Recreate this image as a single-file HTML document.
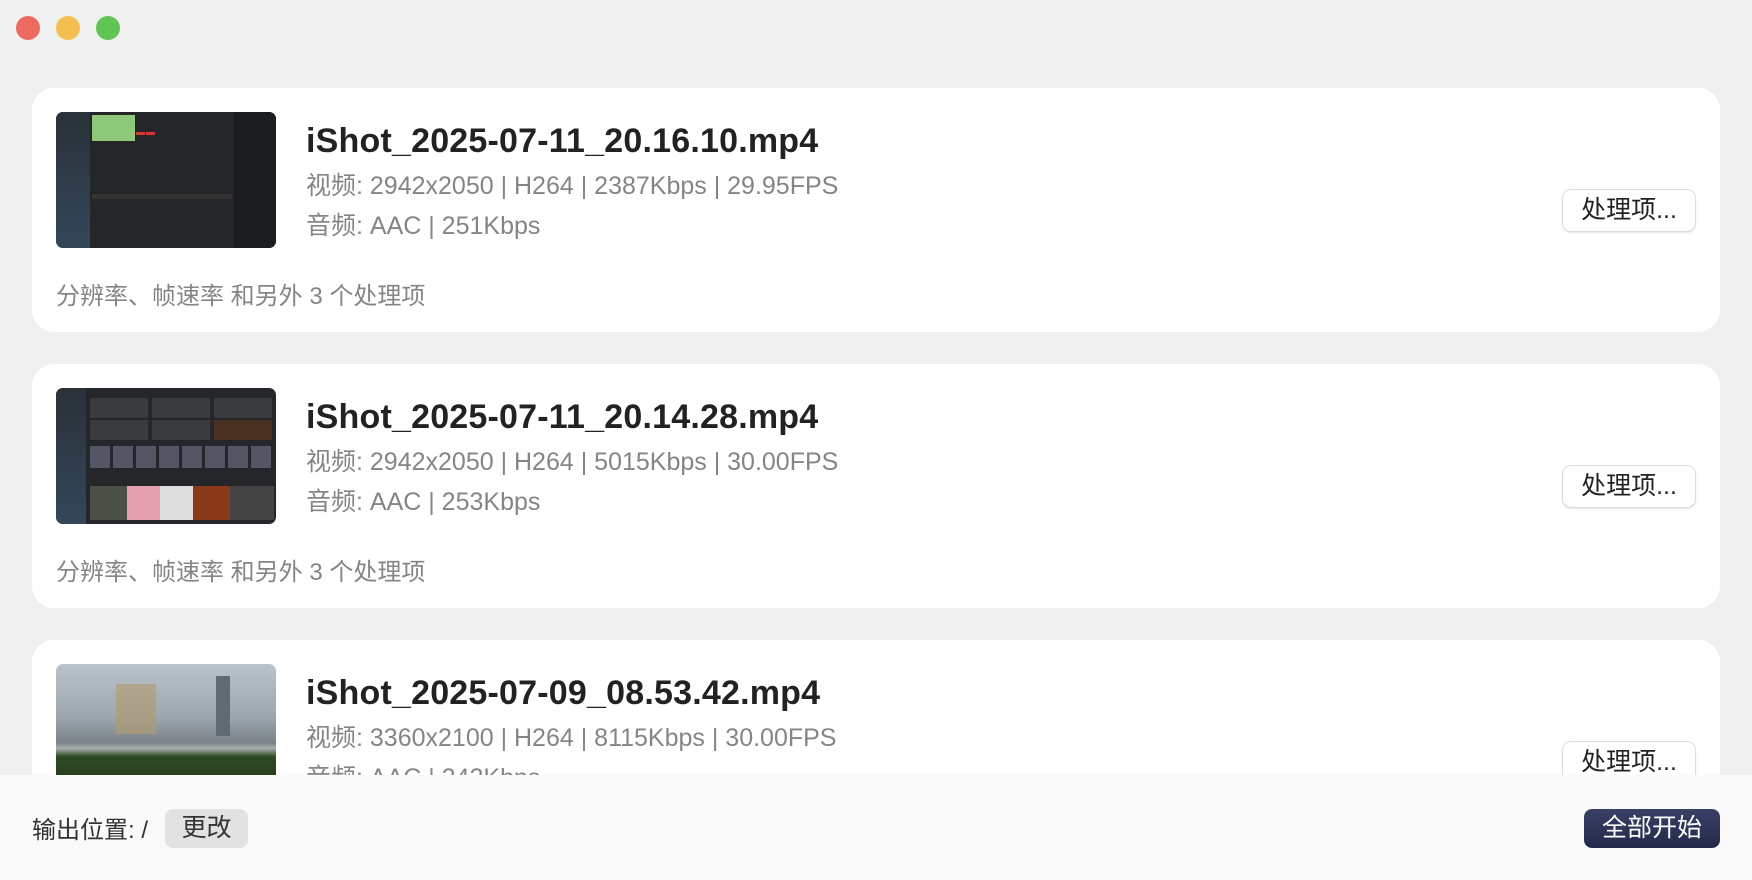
<!DOCTYPE html>
<html><head><meta charset="utf-8">
<style>
*{margin:0;padding:0;box-sizing:border-box}
body{width:1752px;height:880px;overflow:hidden;background:#eff0ef;font-family:"Liberation Sans","Noto Sans CJK SC",sans-serif;position:relative}
.tl{position:absolute;top:16px;width:24px;height:24px;border-radius:50%}
.card{position:absolute;left:32px;width:1688px;height:244px;background:#fff;border-radius:22px}
.thumb{position:absolute;left:24px;top:24px;width:220px;height:136px;border-radius:7px;overflow:hidden;background:#25262a}
.title{position:absolute;left:274px;top:34px;font-size:34px;font-weight:bold;color:#222;letter-spacing:0.2px}
.l1{position:absolute;left:274px;top:78px;font-size:25px;color:#858585}
.l2{position:absolute;left:274px;top:118px;font-size:25px;color:#858585}
.foot{position:absolute;left:24px;top:188px;font-size:24px;color:#858585}
.btn{position:absolute;left:1531px;top:102px;width:132px;height:41px;border-radius:8px;background:#fff;box-shadow:0 0 0 1px #ddd,0 1px 2px rgba(0,0,0,.25);font-size:25px;color:#222;text-align:center;line-height:41px}
.bar{position:absolute;left:0;top:775px;width:1752px;height:105px;background:#fafafa}
</style></head><body>
<div class="tl" style="left:16px;background:#ed6a5e"></div>
<div class="tl" style="left:56px;background:#f5bf4f"></div>
<div class="tl" style="left:96px;background:#61c554"></div>

<div class="card" style="top:88px">
 <div class="thumb">
  <div style="position:absolute;left:0;top:0;width:34px;height:136px;background:linear-gradient(#2a3138,#34475a)"></div>
  <div style="position:absolute;left:36px;top:3px;width:43px;height:26px;background:#8ec87a"></div>
  <div style="position:absolute;left:80px;top:20px;width:9px;height:3px;background:#d33"></div>
  <div style="position:absolute;left:90px;top:20px;width:9px;height:3px;background:#d33"></div>
  <div style="position:absolute;left:178px;top:0;width:42px;height:136px;background:#1c1d20"></div>
  <div style="position:absolute;left:36px;top:82px;width:140px;height:5px;background:#333"></div>
 </div>
 <div class="title">iShot_2025-07-11_20.16.10.mp4</div>
 <div class="l1">视频: 2942x2050 | H264 | 2387Kbps | 29.95FPS</div>
 <div class="l2">音频: AAC | 251Kbps</div>
 <div class="foot">分辨率、帧速率 和另外 3 个处理项</div>
 <div class="btn">处理项...</div>
</div>

<div class="card" style="top:364px">
 <div class="thumb">
  <div style="position:absolute;left:0;top:0;width:30px;height:136px;background:linear-gradient(#2a3138,#34475a)"></div>
  <div style="position:absolute;left:34px;top:10px;width:58px;height:20px;background:#3a3b3f"></div>
  <div style="position:absolute;left:96px;top:10px;width:58px;height:20px;background:#3a3b3f"></div>
  <div style="position:absolute;left:158px;top:10px;width:58px;height:20px;background:#3a3b3f"></div>
  <div style="position:absolute;left:34px;top:32px;width:58px;height:20px;background:#3a3b3f"></div>
  <div style="position:absolute;left:96px;top:32px;width:58px;height:20px;background:#3a3b3f"></div>
  <div style="position:absolute;left:158px;top:32px;width:58px;height:20px;background:#4a3020"></div>
  <div style="position:absolute;left:34px;top:58px;width:184px;height:22px;background:repeating-linear-gradient(90deg,#556 0 20px,#25262a 20px 23px)"></div>
  <div style="position:absolute;left:34px;top:98px;width:184px;height:34px;background:linear-gradient(90deg,#4a5048 0 20%,#e8a0b0 20% 38%,#ddd 38% 56%,#8a3a1a 56% 76%,#444 76%)"></div>
 </div>
 <div class="title">iShot_2025-07-11_20.14.28.mp4</div>
 <div class="l1">视频: 2942x2050 | H264 | 5015Kbps | 30.00FPS</div>
 <div class="l2">音频: AAC | 253Kbps</div>
 <div class="foot">分辨率、帧速率 和另外 3 个处理项</div>
 <div class="btn">处理项...</div>
</div>

<div class="card" style="top:640px;height:235px">
 <div class="thumb" style="background:linear-gradient(#b9c4cc 0%,#9aa5ad 40%,#7a8286 58%,#a8b0b0 62%,#2e4a24 68%,#1e3418 100%)">
  <div style="position:absolute;left:60px;top:20px;width:40px;height:50px;background:#b49a6a;opacity:.6"></div>
  <div style="position:absolute;left:160px;top:12px;width:14px;height:60px;background:#606a72"></div>
 </div>
 <div class="title">iShot_2025-07-09_08.53.42.mp4</div>
 <div class="l1">视频: 3360x2100 | H264 | 8115Kbps | 30.00FPS</div>
 <div class="l2">音频: AAC | 242Kbps</div>
 <div class="btn">处理项...</div>
</div>

<div class="bar">
 <div style="position:absolute;left:32px;top:35px;font-size:24px;color:#333">输出位置: /</div>
 <div style="position:absolute;left:165px;top:34px;width:83px;height:39px;border-radius:8px;background:#e2e2e2;font-size:25px;color:#333;text-align:center;line-height:39px">更改</div>
 <div style="position:absolute;left:1584px;top:34px;width:136px;height:39px;border-radius:8px;background:linear-gradient(#3a4066,#232a4a);font-size:25px;color:#fff;text-align:center;line-height:39px">全部开始</div>
</div>
</body></html>
